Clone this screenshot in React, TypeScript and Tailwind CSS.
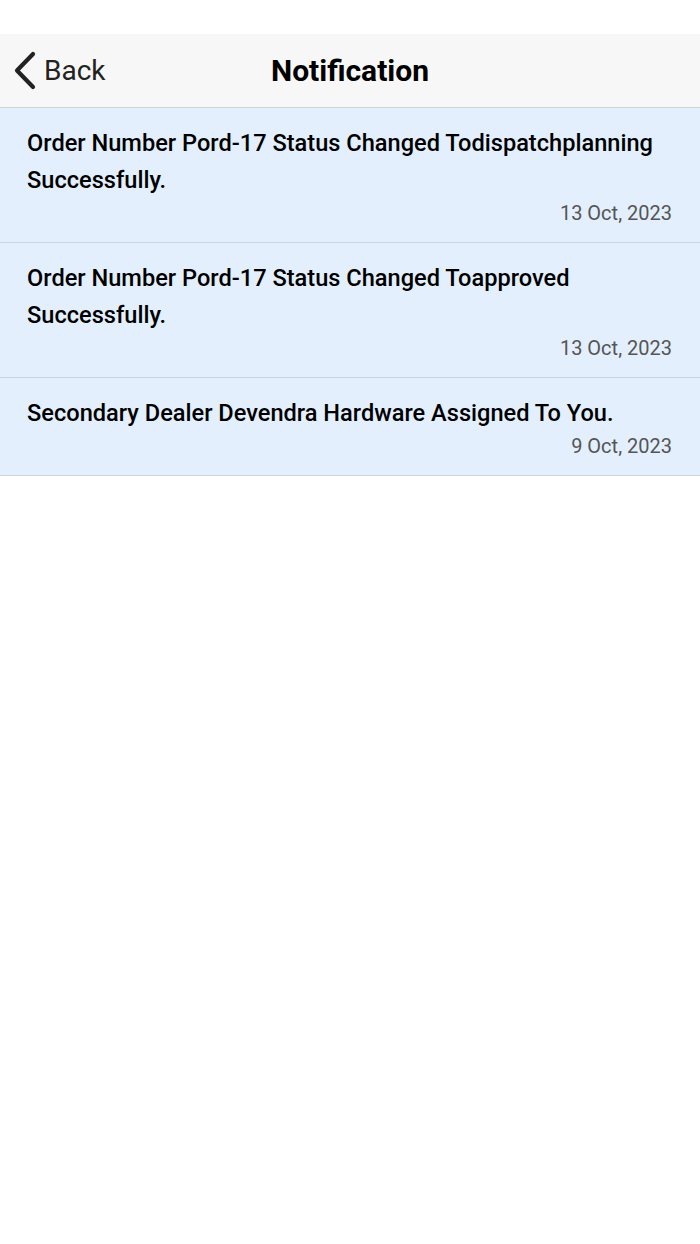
interface Notice {
  id: number;
  message: string;
  date: string;
}

const notices: Notice[] = [
  { id: 1, message: 'Order Number Pord-17 Status Changed Todispatchplanning Successfully.', date: '13 Oct, 2023' },
  { id: 2, message: 'Order Number Pord-17 Status Changed Toapproved Successfully.', date: '13 Oct, 2023' },
  { id: 3, message: 'Secondary Dealer Devendra Hardware Assigned To You.', date: '9 Oct, 2023' },
];

const App = () => {
  return (
    <div className="min-h-[1244px] bg-white font-['Roboto',sans-serif]">
      <div className="h-[34px] bg-white" />

      <div className="relative flex h-[74px] items-center justify-center border-b border-[#d2d2d2] bg-[#f7f7f7]">
        <button className="absolute left-[12px] top-1/2 flex -translate-y-1/2 items-center text-[#222]">
          <svg width="26" height="40" viewBox="0 0 26 40" fill="none" className="mr-[6px]">
            <polyline
              points="21,3 5,19.5 21,36"
              stroke="currentColor"
              strokeWidth="4.2"
              strokeLinecap="round"
              strokeLinejoin="round"
            />
          </svg>
          <span className="text-[28px] leading-none">Back</span>
        </button>
        <h1 className="text-[30px] font-bold leading-none text-black">Notification</h1>
      </div>

      {notices.map((n) => (
        <div
          key={n.id}
          className="border-b border-[#cbd5df] bg-[#e3effd] pb-[15px] pl-[27px] pr-[28px] pt-[17px]"
        >
          <p className="text-[23.6px] font-medium leading-[37px] text-black">{n.message}</p>
          <p className="text-right text-[20px] leading-[28px] text-[#555]">{n.date}</p>
        </div>
      ))}
    </div>
  );
};

export default App;
